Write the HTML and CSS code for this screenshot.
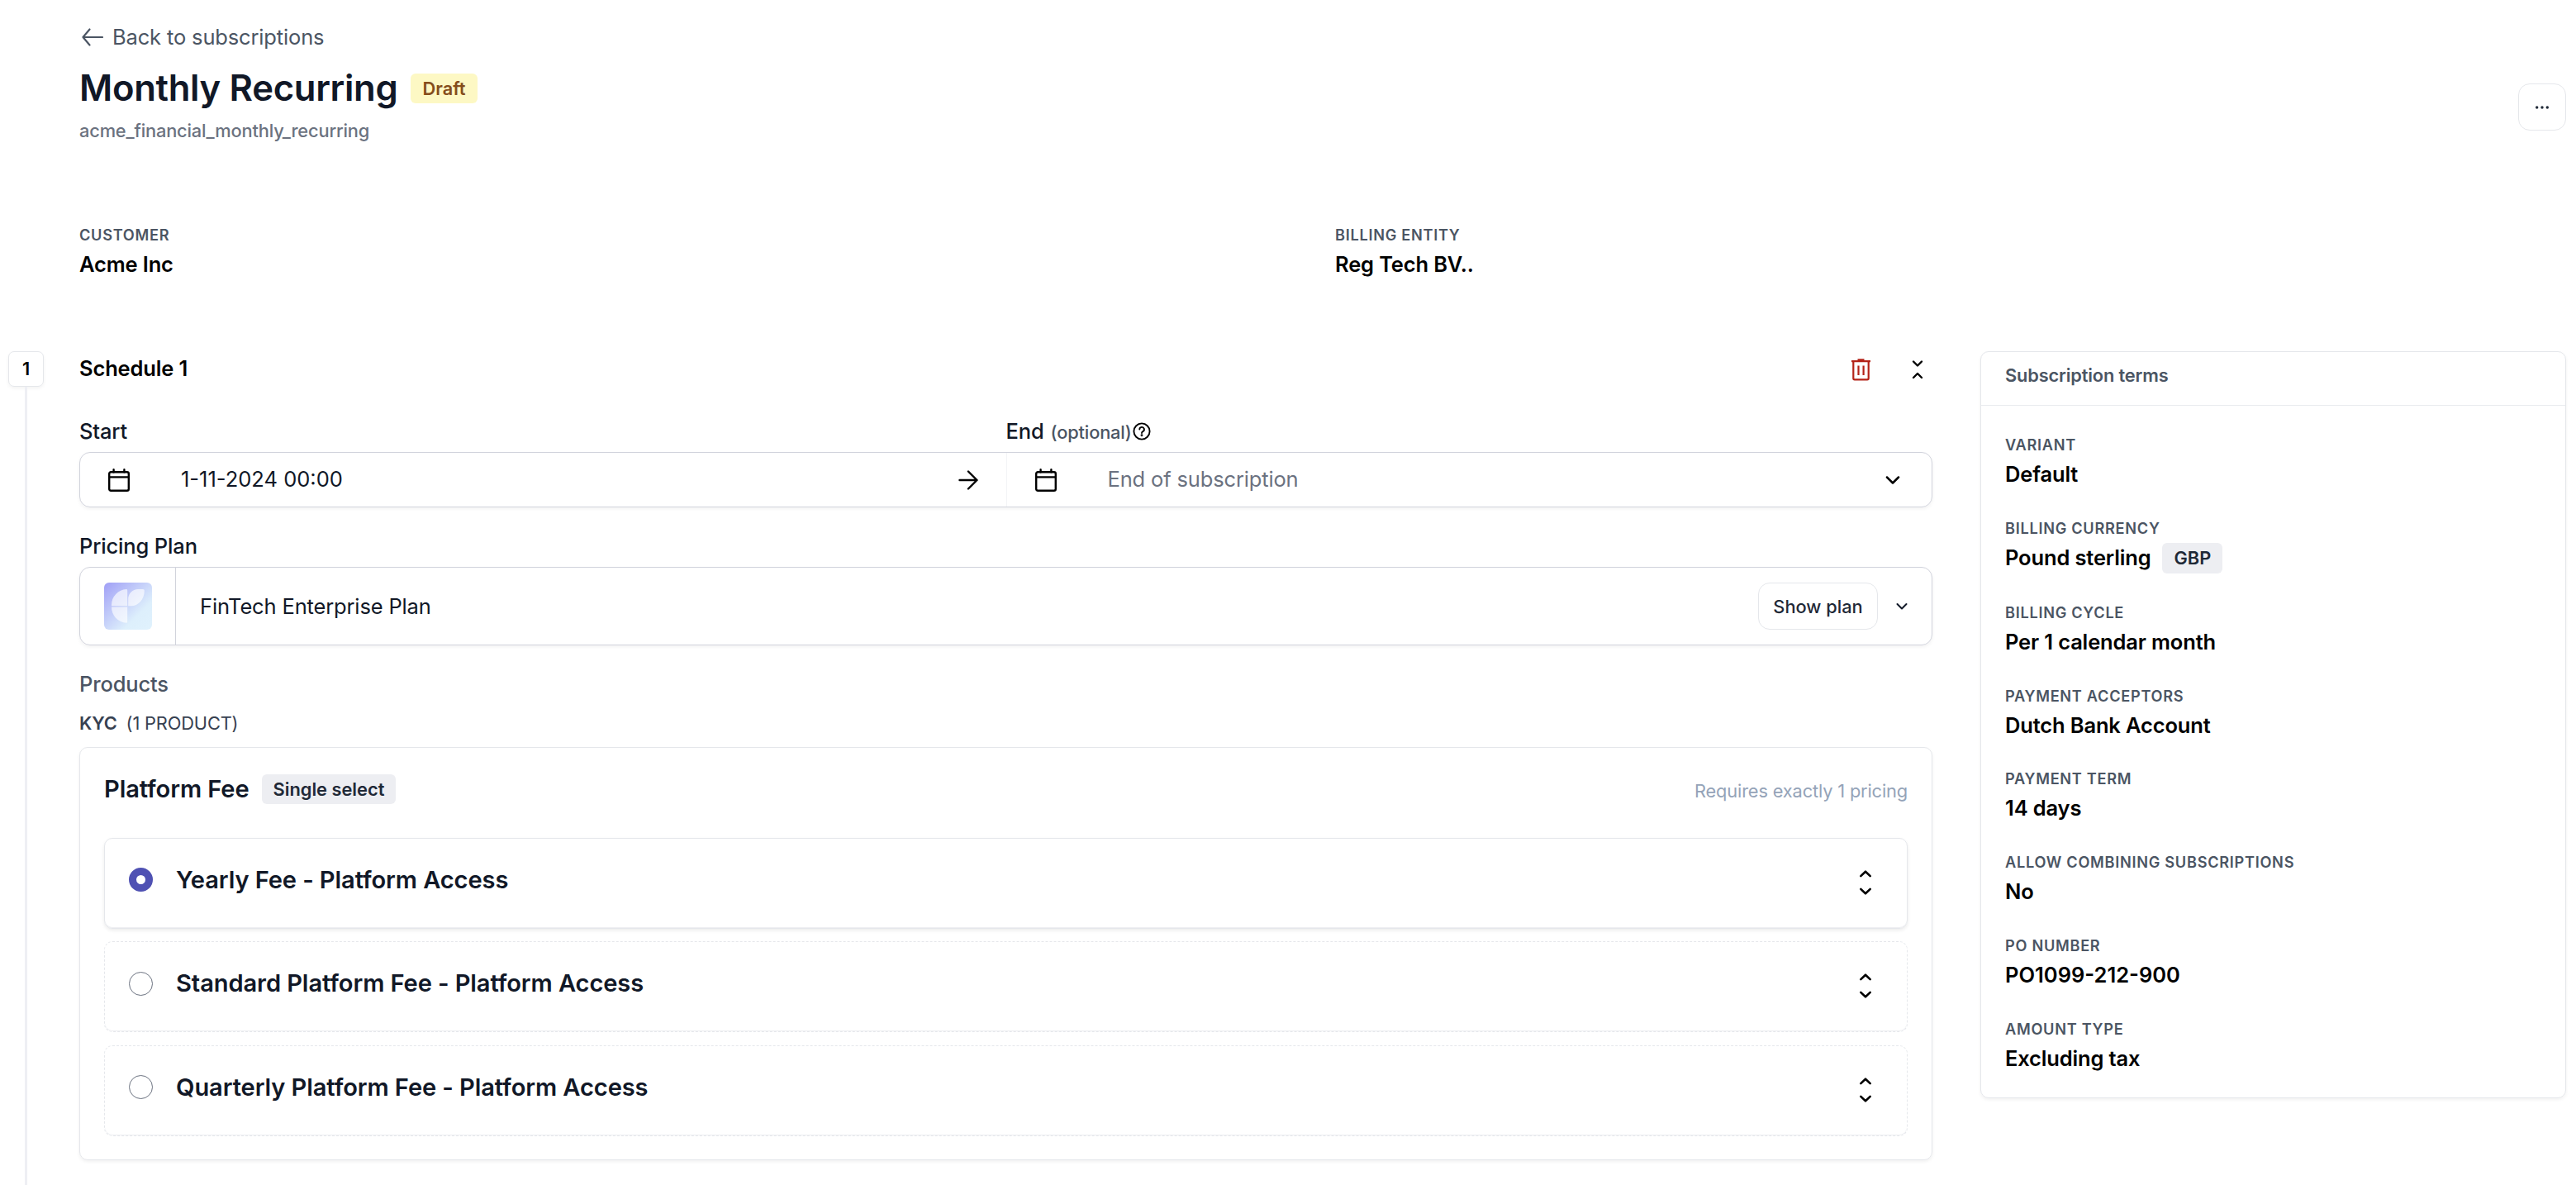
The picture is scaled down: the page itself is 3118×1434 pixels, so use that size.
FILE: index.html
```html
<!DOCTYPE html>
<html lang="en">
<head>
  <meta charset="UTF-8">
  <title>Monthly Recurring</title>
  <link rel="stylesheet" href="styles.css">
</head>
<body>
  <header class="page-header">
    <div class="header-main">
      <a class="back-link">
        <svg width="26" height="22" viewBox="0 0 26 22" fill="none" stroke="currentColor" stroke-width="2.2" stroke-linecap="round" stroke-linejoin="round"><path d="M25 11H1.5M9.5 1.5L1.5 11l8 9.5"/></svg>
        Back to subscriptions
      </a>
      <div class="title-row">
        <h1>Monthly Recurring</h1>
        <span class="badge badge-draft">Draft</span>
      </div>
      <p class="subtitle">acme_financial_monthly_recurring</p>
    </div>
    <button class="btn btn-more">
      <svg width="18" height="4" viewBox="0 0 18 4" fill="currentColor"><circle cx="2.7" cy="2" r="1.7"/><circle cx="9" cy="2" r="1.7"/><circle cx="15.3" cy="2" r="1.7"/></svg>
    </button>
  </header>

  <section class="summary">
    <div>
      <div class="label">CUSTOMER</div>
      <div class="value">Acme Inc</div>
    </div>
    <div>
      <div class="label">BILLING ENTITY</div>
      <div class="value">Reg Tech BV..</div>
    </div>
  </section>

  <main class="layout">
    <div class="timeline">
      <div class="step">1</div>
      <div class="step-line"></div>
    </div>

    <section class="schedule">
      <div class="schedule-header">
        <h2>Schedule 1</h2>
        <div class="schedule-actions">
          <svg class="icon-trash" width="24" height="28" viewBox="0 0 24 28" fill="none" stroke="currentColor" stroke-width="2.2"><path d="M1 4.200h23M8.500 2.400h8M3.300 4v20.800a1.500 1.500 0 0 0 1.500 1.500h15.400a1.500 1.500 0 0 0 1.500-1.500V4M9.500 9.500v11.500M15.600 9.500v11.500"/></svg>
          <svg width="14" height="24" viewBox="0 0 14 24" fill="none" stroke="currentColor" stroke-width="2.4" stroke-linecap="round" stroke-linejoin="round"><path d="M2 2.5l5 5 5-5M2 22l5-5 5 5"/></svg>
        </div>
      </div>

      <div class="field-labels">
        <span class="field-label">Start</span>
        <span class="field-label">End <small>(optional)</small>
          <svg class="icon-help" width="22" height="22" viewBox="0 0 22 22" fill="none" stroke="currentColor" stroke-width="1.9" stroke-linecap="round"><circle cx="11" cy="11" r="9.6"/><path d="M8.3 8.6a2.8 2.8 0 1 1 4 2.6c-.9.5-1.3.9-1.3 1.8"/><circle cx="11" cy="15.8" r=".5"/></svg>
        </span>
      </div>
      <div class="box date-range">
        <div class="date-cell">
          <svg width="26" height="28" viewBox="0 0 26 28" fill="none" stroke="currentColor" stroke-width="2.4" stroke-linecap="round"><rect x="1.2" y="4.2" width="23.6" height="22.6" rx="2"/><path d="M1.2 10.4h23.6M6.6 1.2v3M19.4 1.2v3"/></svg>
          <span class="date-text num">1-11-2024 00:00</span>
          <svg width="24" height="24" viewBox="0 0 24 24" fill="none" stroke="currentColor" stroke-width="2.4" stroke-linecap="round" stroke-linejoin="round"><path d="M1.5 12h21M12 1.5L22.5 12 12 22.5"/></svg>
        </div>
        <div class="date-cell date-end">
          <svg width="26" height="28" viewBox="0 0 26 28" fill="none" stroke="currentColor" stroke-width="2.4" stroke-linecap="round"><rect x="1.2" y="4.2" width="23.6" height="22.6" rx="2"/><path d="M1.2 10.4h23.6M6.6 1.2v3M19.4 1.2v3"/></svg>
          <span class="date-text placeholder">End of subscription</span>
          <svg width="18" height="12" viewBox="0 0 18 12" fill="none" stroke="currentColor" stroke-width="2.5" stroke-linecap="round" stroke-linejoin="round"><path d="M2 2.5l7 7 7-7"/></svg>
        </div>
      </div>

      <div class="field-label plan-label">Pricing Plan</div>
      <div class="box plan-box">
        <div class="plan-logo">
          <svg width="58" height="58" viewBox="0 0 58 58">
            <defs>
              <linearGradient id="logo-bg" x1="0" y1="0" x2="1" y2="1">
                <stop offset="0" stop-color="#a09ff6"/>
                <stop offset=".7" stop-color="#ddeffc"/>
                <stop offset="1" stop-color="#e0f2fd"/>
              </linearGradient>
            </defs>
            <rect width="58" height="57" rx="6" fill="url(#logo-bg)"/>
            <g fill="#fff" fill-opacity=".65">
              <path d="M9 28.3V27A19 19 0 0 1 27 8q1.2 0 1.2 1.2v19.1z"/>
              <path d="M29.2 28.3V20A12 12 0 0 1 41 8h6q1.8 0 1.8 1.8C48.8 21 41 28.3 33 28.3z"/>
              <path d="M9 29.4h19.2v18q0 1.300-1.200 1.300A19 19 0 0 1 9 29.4z"/>
            </g>
          </svg>
        </div>
        <span class="plan-name">FinTech Enterprise Plan</span>
        <button class="btn btn-show">Show plan</button>
        <svg class="plan-chevron" width="14" height="10" viewBox="0 0 14 10" fill="none" stroke="currentColor" stroke-width="2" stroke-linecap="round" stroke-linejoin="round"><path d="M1.5 2L7 7.5L12.5 2"/></svg>
      </div>

      <h3 class="products-title">Products</h3>
      <div class="product-group"><b>KYC</b><span>(1 PRODUCT)</span></div>

      <div class="card product-card">
        <div class="product-header">
          <h4>Platform Fee</h4>
          <span class="badge">Single select</span>
          <span class="requires">Requires exactly 1 pricing</span>
        </div>
        <div class="option selected">
          <span class="radio"></span>
          <span class="option-name">Yearly Fee - Platform Access</span>
          <svg width="16" height="32" viewBox="0 0 16 32" fill="none" stroke="currentColor" stroke-width="2.6" stroke-linecap="round" stroke-linejoin="round"><path d="M2.3 8.1L8 2.7l5.7 5.4M2.3 23.9L8 29.3l5.7-5.4"/></svg>
        </div>
        <div class="option">
          <span class="radio"></span>
          <span class="option-name">Standard Platform Fee - Platform Access</span>
          <svg width="16" height="32" viewBox="0 0 16 32" fill="none" stroke="currentColor" stroke-width="2.6" stroke-linecap="round" stroke-linejoin="round"><path d="M2.3 8.1L8 2.7l5.7 5.4M2.3 23.9L8 29.3l5.7-5.4"/></svg>
        </div>
        <div class="option">
          <span class="radio"></span>
          <span class="option-name">Quarterly Platform Fee - Platform Access</span>
          <svg width="16" height="32" viewBox="0 0 16 32" fill="none" stroke="currentColor" stroke-width="2.6" stroke-linecap="round" stroke-linejoin="round"><path d="M2.3 8.1L8 2.7l5.7 5.4M2.3 23.9L8 29.3l5.7-5.4"/></svg>
        </div>
      </div>
    </section>

    <aside class="card terms">
      <div class="terms-header">Subscription terms</div>
      <div class="terms-body">
        <div class="term">
          <div class="label">VARIANT</div>
          <div class="value">Default</div>
        </div>
        <div class="term">
          <div class="label">BILLING CURRENCY</div>
          <div class="value">Pound sterling <span class="badge">GBP</span></div>
        </div>
        <div class="term">
          <div class="label">BILLING CYCLE</div>
          <div class="value">Per 1 calendar month</div>
        </div>
        <div class="term">
          <div class="label">PAYMENT ACCEPTORS</div>
          <div class="value">Dutch Bank Account</div>
        </div>
        <div class="term">
          <div class="label">PAYMENT TERM</div>
          <div class="value">14 days</div>
        </div>
        <div class="term">
          <div class="label">ALLOW COMBINING SUBSCRIPTIONS</div>
          <div class="value">No</div>
        </div>
        <div class="term">
          <div class="label">PO NUMBER</div>
          <div class="value num">PO1099-212-900</div>
        </div>
        <div class="term">
          <div class="label">AMOUNT TYPE</div>
          <div class="value">Excluding tax</div>
        </div>
      </div>
    </aside>
  </main>
</body>
</html>
```
FILE: styles.css
```css
* {
  box-sizing: border-box;
}

body {
  margin: 0;
  height: 1434px;
  display: flex;
  flex-direction: column;
  overflow: hidden;
  font-family: Inter, "Liberation Sans", sans-serif;
  font-size: 25.5px;
  line-height: 36px;
  letter-spacing: -0.006em;
  font-optical-sizing: none;
  color: #111827;
  background: #fff;
}

h1, h2, h3, h4, p {
  margin: 0;
}

svg {
  display: block;
  flex: none;
}

.page-header {
  display: flex;
  justify-content: space-between;
  padding: 27px 12px 0 96px;
}

.back-link {
  display: flex;
  align-items: center;
  gap: 11px;
  padding-left: 3px;
  color: #4b5563;
}

.title-row {
  display: flex;
  align-items: center;
  gap: 16px;
  margin-top: 16px;
}

h1 {
  font-size: 43.6px;
  line-height: 56px;
  font-weight: 600;
  letter-spacing: -0.3px;
}

.badge {
  height: 36px;
  padding: 0 14px;
  border-radius: 6px;
  background: #edeef2;
  color: #1f2937;
  font-size: 21.8px;
  line-height: 36px;
  font-weight: 600;
  letter-spacing: 0;
}

.badge-draft {
  background: #fdf8c4;
  color: #854d1b;
}

.subtitle {
  margin-top: 8px;
  font-size: 21.8px;
  line-height: 30px;
  font-weight: 500;
  color: #6b7280;
}

.btn {
  display: flex;
  align-items: center;
  justify-content: center;
  height: 57px;
  padding: 0;
  border: 1px solid #e5e7eb;
  border-radius: 14px;
  background: #fff;
  color: #1f2937;
  font: 500 21.8px/30px Inter, "Liberation Sans", sans-serif;
}

.btn-more {
  width: 58px;
  margin-top: 74px;
}

.summary {
  display: grid;
  grid-template-columns: 1fr 1fr;
  column-gap: 30px;
  margin-top: 99px;
  padding: 0 12px 0 96px;
}

.label {
  font-size: 18.2px;
  line-height: 24px;
  font-weight: 600;
  letter-spacing: 0.7px;
  color: #4b5563;
}

.value {
  display: flex;
  align-items: center;
  gap: 14px;
  margin-top: 6px;
  font-weight: 600;
  color: #000;
}

.num {
  letter-spacing: 0;
}

/* timeline, schedule and terms columns */
.layout {
  flex: 1;
  display: grid;
  grid-template-columns: 43px 1fr 709px;
  align-items: start;
  margin-top: 87px;
  padding: 0 12px 0 10px;
}

.timeline {
  align-self: stretch;
  display: flex;
  flex-direction: column;
  align-items: center;
}

.step {
  width: 43px;
  height: 43px;
  border: 1px solid #e5e7eb;
  border-radius: 7px;
  box-shadow: 0 2px 4px rgba(0, 0, 0, 0.05);
  font-size: 21.8px;
  line-height: 41px;
  font-weight: 600;
  text-align: center;
  color: #000;
}

.step-line {
  flex: 1;
  width: 3px;
  background: #eeeff4;
}

.schedule {
  margin: 0 58px 0 43px;
}

.schedule-header {
  display: flex;
  align-items: center;
  justify-content: space-between;
  height: 42px;
  color: #000;
}

.schedule-header h2 {
  font-size: 25.5px;
  font-weight: 600;
}

.schedule-actions {
  display: flex;
  align-items: center;
  gap: 50px;
  padding: 1px 11px 0 0;
}

.icon-trash {
  color: #b42318;
}

.field-labels {
  display: grid;
  grid-template-columns: 1fr 1fr;
  margin-top: 37px;
}

.field-label {
  display: flex;
  align-items: baseline;
  font-weight: 500;
}

.field-label small {
  margin-left: 8px;
  font-size: 21.8px;
  color: #4b5563;
}

.icon-help {
  align-self: center;
  margin: 0 0 1px 1px;
  color: #000;
}

.box {
  display: flex;
  border: 1px solid #d1d3dc;
  border-radius: 13px;
  box-shadow: 0 2px 4px rgba(0, 0, 0, 0.05);
}

.date-range {
  display: grid;
  grid-template-columns: 1fr 1fr;
  height: 67px;
  margin-top: 6px;
  color: #000;
}

.date-cell {
  display: flex;
  align-items: center;
  padding: 0 34px;
}

.date-end {
  padding-right: 38px;
  border-left: 1px solid #f3f4f6;
}

.date-text {
  flex: 1;
  margin-left: 62px;
  padding-bottom: 1px;
  color: #111827;
}

.date-text.placeholder {
  color: #6b7280;
}

.plan-label {
  margin-top: 29px;
}

.plan-box {
  align-items: center;
  height: 95px;
  margin-top: 7px;
}

.plan-logo {
  display: flex;
  align-items: center;
  align-self: stretch;
  padding: 0 28px 0 29px;
  border-right: 1px solid #d1d3dc;
}

.plan-name {
  flex: 1;
  padding-left: 29px;
}

.btn-show {
  width: 145px;
}

.plan-chevron {
  margin: 0 29px 0 22px;
}

.products-title {
  margin-top: 29px;
  font-size: 25.5px;
  font-weight: 500;
  color: #4b5563;
}

.product-group {
  display: flex;
  gap: 11px;
  margin-top: 14px;
  font-size: 21.8px;
  line-height: 30px;
  color: #374151;
}

.product-group b {
  font-weight: 600;
}

.card {
  border: 1px solid #e5e7eb;
  border-radius: 10px;
  box-shadow: 0 2px 4px rgba(0, 0, 0, 0.06);
}

.product-card {
  margin-top: 14px;
  padding: 32px 29px 28px;
}

.product-header {
  display: flex;
  align-items: center;
  height: 36px;
  margin-bottom: 40.5px;
}

.product-header h4 {
  margin-right: 15px;
  font-size: 29.1px;
  font-weight: 600;
  letter-spacing: -0.1px;
}

.requires {
  margin-left: auto;
  padding-top: 4px;
  font-size: 21.8px;
  color: #94a3b8;
}

.option {
  display: flex;
  align-items: center;
  height: 110px;
  margin-bottom: 15.5px;
  padding: 0 42px 8px 29px;
  border: 1px dashed #e5e7eb;
  border-radius: 10px;
  box-shadow: inset 0 -1px 0 #eeeff2;
}

.option:last-child {
  margin-bottom: 0;
}

.option.selected {
  border-style: solid;
  box-shadow: inset 0 -1px 0 #eeeff2, 0 2px 4px rgba(0, 0, 0, 0.08);
}

.radio {
  width: 29px;
  height: 29px;
  border: 1px solid #6b7280;
  border-radius: 50%;
}

.selected .radio {
  border: 9px solid #4f51b3;
}

.option-name {
  flex: 1;
  margin-left: 28px;
  font-size: 29.1px;
  font-weight: 600;
  letter-spacing: -0.1px;
}

.option svg {
  margin-top: 6px;
  color: #000;
}

.terms-header {
  height: 65px;
  padding: 13px 29px;
  border-bottom: 1px solid #e9ebef;
  font-size: 21.8px;
  line-height: 30px;
  font-weight: 600;
  color: #4b5563;
}

.terms-body {
  display: flex;
  flex-direction: column;
  gap: 34.85px;
  padding: 35px 29px 29px;
}

.terms-body .badge {
  height: 37px;
}
```
